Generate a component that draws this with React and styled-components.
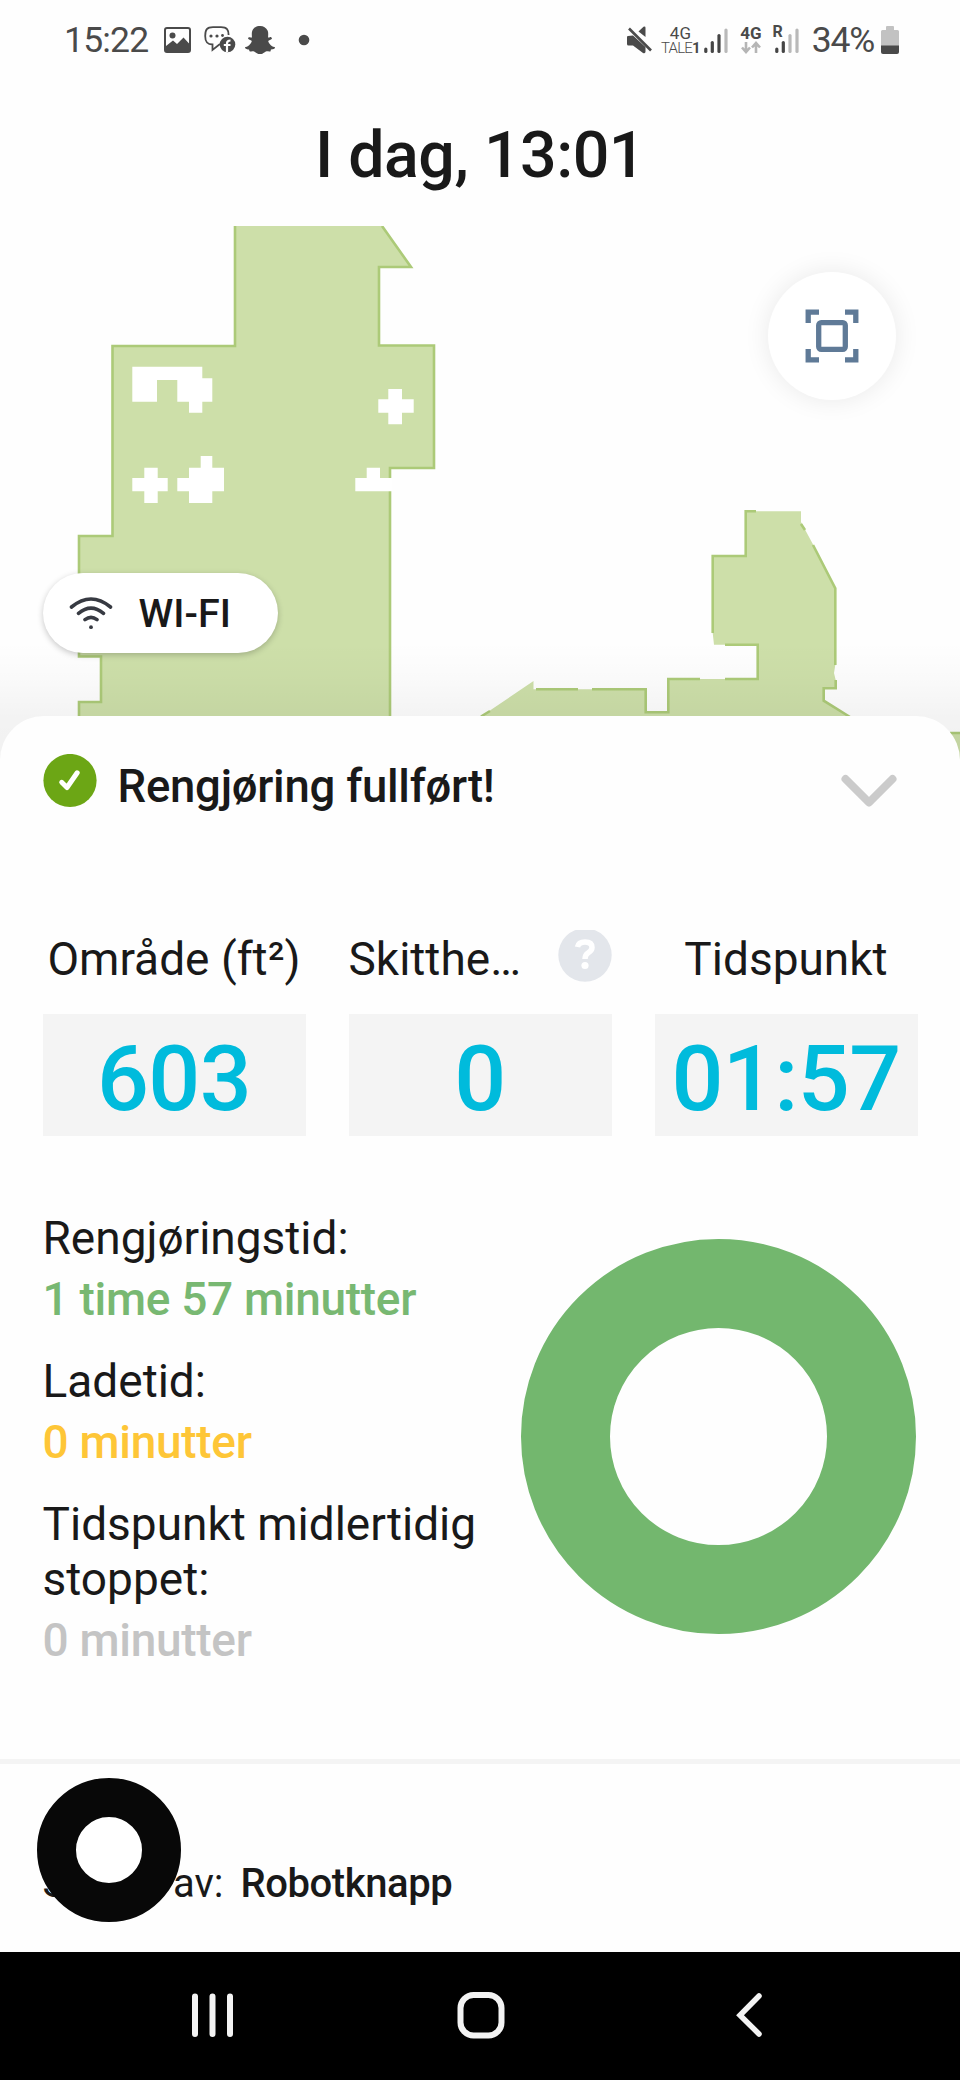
import React, { Component } from 'react'
import styled, { createGlobalStyle } from 'styled-components'
import { FaSnapchatGhost } from 'react-icons/fa'

const GlobalStyle = createGlobalStyle`
  * {
    box-sizing: border-box;
  }
  body {
    margin: 0;
    background: #fff;
    font-family: Roboto, "Liberation Sans", sans-serif;
    color: #191919;
  }
  svg {
    display: block;
    flex: none;
  }
`
const Screen = styled.div`
  display: flex;
  flex-direction: column;
  width: 960px;
  height: 2080px;
  overflow: hidden;
  background: #fefefe;
`
const StatusBar = styled.header`
  display: flex;
  justify-content: space-between;
  height: 82px;
  padding: 19px 61px 0 64px;
  color: #4a4a4a;
`
const StatusGroup = styled.div`
  display: flex;
  align-items: center;
  height: 42px;
`
const StatusText = styled.span`
  font-size: 35.5px;
  line-height: 42px;
  letter-spacing: ${props => props.$spacing || '0'};
  margin-right: ${props => props.$gap || '0'};
`
const StatusIcon = styled.span`
  display: flex;
  margin-right: ${props => props.$gap}px;
`
const Network = styled.span`
  display: flex;
  flex-direction: column;
  align-items: center;
  width: ${props => props.$width}px;
  height: 29px;
  margin-right: ${props => props.$gap}px;
  font-size: 17px;
  line-height: 15px;
  font-weight: ${props => props.$weight || 500};
`
const Operator = styled.span`
  font-size: 15px;
  line-height: 15px;
  font-weight: 300;
  letter-spacing: -0.8px;
  b {
    font-weight: 700;
  }
`
const Roaming = styled.span`
  align-self: flex-start;
  height: 29px;
  margin-right: -8px;
  margin-top: 5px;
  font-size: 16px;
  line-height: 16px;
  font-weight: 700;
`
const Title = styled.h1`
  height: 144px;
  margin: 0;
  padding-top: 35px;
  font-size: 64.5px;
  line-height: 76px;
  font-weight: 500;
  letter-spacing: -0.5px;
  text-align: center;
`
const MapArea = styled.section`
  position: relative;
  height: 534px;
  margin-bottom: -44px;
  overflow: hidden;
`
const MapShade = styled.div`
  position: absolute;
  left: 0;
  right: 0;
  bottom: 0;
  height: 118px;
  background: linear-gradient(rgba(0, 0, 0, 0), rgba(0, 0, 0, 0.014) 30%, rgba(0, 0, 0, 0.042) 63%, rgba(0, 0, 0, 0.05));
`
const FitButton = styled.button`
  position: absolute;
  top: 46px;
  right: 64px;
  display: flex;
  align-items: center;
  justify-content: center;
  width: 128px;
  height: 128px;
  padding: 0;
  border: none;
  border-radius: 50%;
  background: #fff;
  box-shadow: 0 0 26px rgba(0, 0, 0, 0.085);
`
const WifiButton = styled.button`
  position: absolute;
  top: 346.5px;
  left: 42.5px;
  display: flex;
  align-items: center;
  width: 235px;
  height: 80px;
  padding: 0 0 0 26px;
  border: none;
  border-radius: 40px;
  background: #fff;
  box-shadow: 0 2px 6px rgba(0, 0, 0, 0.22);
  color: #191919;
  font-family: inherit;
  font-size: 39.5px;
  font-weight: 500;
  line-height: 46px;
  span {
    margin-left: 26px;
    padding-top: 2px;
  }
`
const Sheet = styled.main`
  position: relative;
  height: 1043px;
  padding: 38px 42.5px 0;
  border-radius: 44px 44px 0 0;
  background: #fefefe;
`
const SheetHeader = styled.div`
  display: flex;
  height: 173px;
`
const SheetTitle = styled.h2`
  flex: 1;
  margin: 5px 0 0 21px;
  font-size: 45.5px;
  line-height: 55px;
  font-weight: 500;
  letter-spacing: -0.25px;
`
const Chevron = styled.div`
  padding: 17px 18px 0 0;
`
const Stats = styled.div`
  display: grid;
  grid-template-columns: repeat(3, 263px);
  justify-content: space-between;
`
const StatLabel = styled.div`
  display: flex;
  justify-content: ${props => (props.$help ? 'space-between' : 'center')};
  height: 87px;
  padding-top: 5px;
  font-size: 46px;
  line-height: 55px;
  white-space: nowrap;
`
const HelpBadge = styled.span`
  margin-top: -2px;
`
const StatValue = styled.div`
  height: 122px;
  padding-top: 11px;
  background: #f4f4f4;
  color: #00bbdc;
  font-size: 91.5px;
  line-height: 108px;
  font-weight: 500;
  letter-spacing: -0.6px;
  text-align: center;
`
const Breakdown = styled.div`
  display: flex;
  justify-content: space-between;
  padding: 74.5px 2px 0 0;
`
const Times = styled.dl`
  width: 450px;
  margin: 0;
  font-size: 46px;
  line-height: 55px;
`
const TimeLabel = styled.dt`
  margin-top: ${props => (props.$first ? 0 : 27)}px;
`
const TimeValue = styled.dd`
  margin: 6px 0 0;
  font-weight: 500;
  letter-spacing: -0.3px;
  color: ${props => props.$color};
`
const Donut = styled.div`
  width: 395px;
  height: 395px;
  margin-top: 28.5px;
  border: 89px solid #73b76e;
  border-radius: 50%;
`
const Footer = styled.footer`
  position: relative;
  height: 193px;
  padding: 97px 0 0 42.5px;
  border-top: 5.5px solid #f4f4f4;
  font-size: 40px;
  line-height: 46px;
  b {
    font-weight: 500;
    letter-spacing: -0.4px;
    margin-left: 7px;
  }
`
// floating assistive button, sits over the footer text
const FloatingButton = styled.div`
  position: absolute;
  top: 14px;
  left: 37px;
  width: 144px;
  height: 144px;
  border: 39px solid #080808;
  border-radius: 50%;
  background: #fff;
`
const NavBar = styled.nav`
  display: grid;
  grid-template-columns: 42px 55px 30px;
  column-gap: 223px;
  justify-content: start;
  height: 128px;
  padding: 39px 0 0 192px;
  background: #000;
`

const times = [
    { label: 'Rengjøringstid:', value: '1 time 57 minutter', color: '#78b872' },
    { label: 'Ladetid:', value: '0 minutter', color: '#fec637' },
    { label: 'Tidspunkt midlertidig stoppet:', value: '0 minutter', color: '#c4c4c4' },
]

const Signal = ({ level, width }) => (
    <svg width={width} height="27" viewBox="0 0 24 27">
        {[[1.8, 21], [8.3, 14.5], [15, 7.5], [22, 2]].map(([x, y], i) => (
            <path key={x} d={`M${x} ${y + 1}V24.5`} stroke={i < level ? '#454545' : '#b9b9b9'} strokeWidth="3.2" strokeLinecap="round" />
        ))}
    </svg>
)

const FloorMap = () => (
    <svg width="960" height="534" viewBox="0 226 960 534">
        <g fill="#cddfa9">
            <path d="M235 226H382L411 267H379V345.5H434V468H390V760H79V702H101V656.5H79V536H112.5V346H235Z" />
            <path d="M481 716.5L533.5 681V689.3H645.7V712.3H668.3V679H757.7V644.7H714L712.7 633V556H745.7V511.3H801V522L813.3 545L835.3 588.3V665L834 673L835.7 680V688.3H823.7V700.7L850 717L870 760H470Z" />
            <path d="M950 733H960V760H950Z" />
        </g>
        <g fill="none" stroke="#acca78" strokeWidth="2.6">
            <path d="M235 226V346H112.5V536H79V656.5H101V702H79V760M382 226L411 267H379V345.5H434V468H390V760" />
            <path d="M481 716.5L490 711M536 689.3H578M592 689.3H645.7V712.3H668.3V679H700M725 679H757.7V644.7H725M712.7 633V556H745.7V511.3H756M801 524L805 530M813 545L835.3 588.3V665M835.7 680V688.3H823.7V700.7L850 717M950 733H960" />
        </g>
        <g fill="#fff">
            <path d="M132.3 366.7H202.3V378.3H212.3V401.7H202.3V412.7H189V401.7H177.3V380H157V401.7H132.3Z" />
            <path d="M388.3 389H402V399.3H413.7V412.7H402V424.3H388.3V412.7H378.3V399.3H388.3Z" />
            <path d="M144.3 467.7H157.7V478H167.7V491.3H157.7V503H144.3V491.3H132.3V478H144.3Z" />
            <path d="M200.7 456H212.3V467.7H224V491.3H212.3V503H189V491.3H177.3V478H189V467.7H200.7Z" />
            <path d="M366.7 467.7H380V478H392V491.3H355.3V478H366.7Z" />
        </g>
    </svg>
)

class Status extends Component {
    render() {
        return (
            <StatusBar>
                <StatusGroup>
                    <StatusText $spacing="-0.8px" $gap="16px">15:22</StatusText>
                    <StatusIcon $gap={13}>
                        <svg width="27" height="26" viewBox="0 0 27 26">
                            <rect x="1" y="1" width="25" height="24" rx="2" fill="none" stroke="#4a4a4a" strokeWidth="2" />
                            <circle cx="8.5" cy="8.5" r="3" fill="#4a4a4a" />
                            <path d="M2 19L9 13.5L13 17L19.5 10.5L25.5 17V25H2Z" fill="#4a4a4a" />
                        </svg>
                    </StatusIcon>
                    <StatusIcon $gap={9}>
                        <svg width="32" height="28" viewBox="0 0 32 28">
                            <path d="M16 18L8.5 24V18.5C3.5 18.5 1.2 16.5 1.2 10C1.2 3.5 3 1.2 9 1.2H17C23 1.2 24.6 3.5 24.6 9" fill="none" stroke="#4a4a4a" strokeWidth="1.8" />
                            <circle cx="7" cy="10" r="1.6" fill="#4a4a4a" />
                            <circle cx="13" cy="10" r="1.6" fill="#4a4a4a" />
                            <circle cx="18.5" cy="9.5" r="1.4" fill="#4a4a4a" />
                            <circle cx="23.5" cy="18.5" r="7.8" fill="#4a4a4a" />
                            <path d="M23 26V17.5Q23 14.5 26.5 14.5M19.8 19H26.5" fill="none" stroke="#fff" strokeWidth="2.2" />
                        </svg>
                    </StatusIcon>
                    <StatusIcon $gap={23}>
                        <FaSnapchatGhost size={30} />
                    </StatusIcon>
                    <svg width="12" height="12"><circle cx="6" cy="6" r="5.3" fill="#4a4a4a" /></svg>
                </StatusGroup>
                <StatusGroup>
                    <StatusIcon $gap={7}>
                        <svg width="26" height="28" viewBox="0 0 26 28" fill="#4a4a4a">
                            <path d="M1 10Q0 10 0 11V18Q0 19.5 1.5 19.5H6L16 27Q18.5 28 18.5 25.5V21L6 9.5Z" />
                            <path d="M11.5 5.5L16.5 0.8Q18.5 0 18.5 2V11Z" />
                            <path d="M2 2.5L24 24.5" stroke="#4a4a4a" strokeWidth="2.6" />
                        </svg>
                    </StatusIcon>
                    <Network $width={40} $gap={4} $weight={400}>
                        4G
                        <Operator>TALE<b>1</b></Operator>
                    </Network>
                    <StatusIcon $gap={12}><Signal level={3} width={24} /></StatusIcon>
                    <Network $width={21} $gap={11} $weight={700}>
                        4G
                        <svg width="20" height="13" viewBox="0 0 20 13" fill="none" stroke="#b5b5b5" strokeWidth="2.6">
                            <path d="M5 1V11M1 6.5L5 11L9 6.5M15 12V2M11 6.5L15 2L19 6.5" />
                        </svg>
                    </Network>
                    <Roaming>R</Roaming>
                    <StatusIcon $gap={13}><Signal level={2} width={24} /></StatusIcon>
                    <StatusText $spacing="-1.2px" $gap="7px">34%</StatusText>
                    <svg width="18" height="28" viewBox="0 0 18 28">
                        <path d="M6 0H12Q13 0 13 1V4H16.5Q18 4 18 5.5V20H0V5.5Q0 4 1.5 4H5V1Q5 0 6 0Z" fill="#c2c2c2" />
                        <path d="M0 19.5H18V26Q18 28 16 28H2Q0 28 0 26Z" fill="#4a4a4a" />
                    </svg>
                </StatusGroup>
            </StatusBar>
        );
    }
}

class RoomMap extends Component {
    render() {
        return (
            <MapArea>
                <FloorMap />
                <MapShade />
                <FitButton aria-label="Tilpass">
                    <svg width="54" height="54" viewBox="0 0 54 54" fill="none" stroke="#5f7a97" strokeWidth="5.3">
                        <path d="M3.2 14V3.2H14M40 3.2H50.8V14M50.8 40V50.8H40M14 50.8H3.2V40" />
                        <rect x="13.7" y="13.7" width="26.6" height="26.6" rx="2.5" />
                    </svg>
                </FitButton>
                <WifiButton>
                    <svg width="44" height="34" viewBox="0 0 44 34" fill="none" stroke="#373a42" strokeWidth="3.6" strokeLinecap="round">
                        <path d="M2.5 11Q22 -5 41.5 11M9.5 17.3Q22 7 34.5 17.3M16 23.7Q22 19 28 23.7" />
                        <circle cx="22" cy="31.2" r="1.9" fill="#373a42" stroke="none" />
                    </svg>
                    <span>WI-FI</span>
                </WifiButton>
            </MapArea>
        );
    }
}

class Summary extends Component {
    render() {
        return (
            <Sheet>
                <SheetHeader>
                    <svg width="54" height="54" viewBox="0 0 54 54">
                        <circle cx="27" cy="26.5" r="26.6" fill="#6ca615" />
                        <path d="M18.7 28.3L24 33.5L34.2 18.8" fill="none" stroke="#fff" strokeWidth="5" strokeLinecap="round" strokeLinejoin="round" />
                    </svg>
                    <SheetTitle>Rengjøring fullført!</SheetTitle>
                    <Chevron>
                        <svg width="62" height="40" viewBox="0 0 62 40">
                            <path d="M7.5 8L31 31.5L54.5 8" fill="none" stroke="#cbcbcb" strokeWidth="8" strokeLinecap="round" strokeLinejoin="round" />
                        </svg>
                    </Chevron>
                </SheetHeader>
                <Stats>
                    <div>
                        <StatLabel>Område (ft²)</StatLabel>
                        <StatValue>603</StatValue>
                    </div>
                    <div>
                        <StatLabel $help>
                            Skitthe…
                            <HelpBadge>
                                <svg width="54" height="52" viewBox="0 2 54 52">
                                    <circle cx="27" cy="27" r="26.7" fill="#e3e6eb" />
                                    <path d="M19.5 19Q20.5 14 27 14Q34 14 34 19.5Q34 22.5 30 25Q27 27 27 31" fill="none" stroke="#fff" strokeWidth="5.5" />
                                    <circle cx="27" cy="37.5" r="3.6" fill="#fff" />
                                </svg>
                            </HelpBadge>
                        </StatLabel>
                        <StatValue>0</StatValue>
                    </div>
                    <div>
                        <StatLabel>Tidspunkt</StatLabel>
                        <StatValue>01:57</StatValue>
                    </div>
                </Stats>
                <Breakdown>
                    <Times>
                        {times.map((time, i) => (
                            <React.Fragment key={time.label}>
                                <TimeLabel $first={i === 0}>{time.label}</TimeLabel>
                                <TimeValue $color={time.color}>{time.value}</TimeValue>
                            </React.Fragment>
                        ))}
                    </Times>
                    <Donut />
                </Breakdown>
            </Sheet>
        );
    }
}

class App extends Component {
    render() {
        return (
            <Screen>
                <GlobalStyle />
                <Status />
                <Title>I dag, 13:01</Title>
                <RoomMap />
                <Summary />
                <Footer>
                    Startet av: <b>Robotknapp</b>
                    <FloatingButton />
                </Footer>
                <NavBar>
                    <svg width="42" height="48" viewBox="0 0 42 48" stroke="#f3f3f3" strokeWidth="6" strokeLinecap="round">
                        <path d="M3 5.5V43M20.5 5.5V43M38 5.5V43" />
                    </svg>
                    <svg width="48" height="48" viewBox="0 0 48 48">
                        <rect x="3.5" y="4" width="41" height="40.5" rx="13" fill="none" stroke="#f3f3f3" strokeWidth="6" />
                    </svg>
                    <svg width="30" height="48" viewBox="0 0 30 48">
                        <path d="M24 5L5 24.2L24 43" fill="none" stroke="#f3f3f3" strokeWidth="5.5" strokeLinecap="round" />
                    </svg>
                </NavBar>
            </Screen>
        );
    }
}

export default App
